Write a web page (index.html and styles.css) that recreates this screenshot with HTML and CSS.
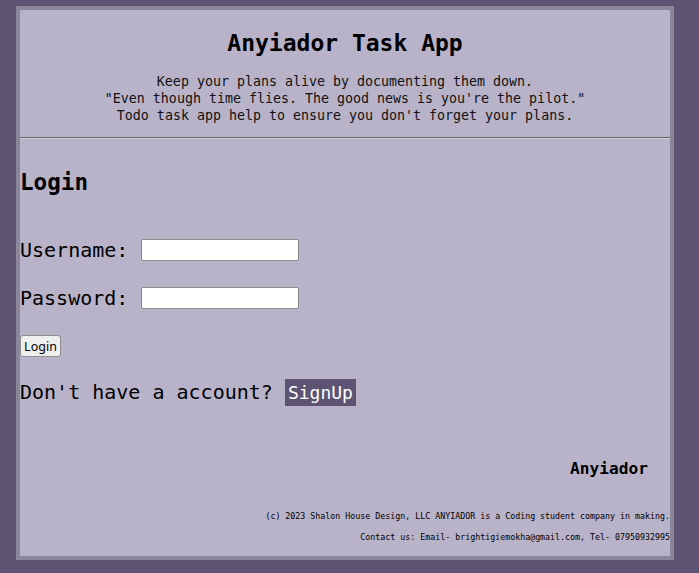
FILE: index.html
```html
<!DOCTYPE html>
<html lang="en">
<head>
<meta charset="utf-8">
<title>Anyiador Task App</title>
<link rel="stylesheet" href="styles.css">
</head>
<body>
<div class="app">
  <header class="header">
    <h1 class="title">Anyiador Task App</h1>
    <p class="intro">Keep your plans alive by documenting them down.<br>"Even though time flies. The good news is you're the pilot."<br>Todo task app help to ensure you don't forget your plans.</p>
  </header>
  <hr class="rule">
  <main class="login">
    <h2 class="login-title">Login</h2>
    <form class="form">
      <div class="row"><label class="label" for="u">Username:</label><input class="field" id="u" type="text"></div>
      <div class="row"><label class="label" for="p">Password:</label><input class="field" id="p" type="password"></div>
      <div class="row btn-row"><button class="btn" type="button">Login</button></div>
    </form>
    <div class="signup-row">Don't have a account? <a class="signup" href="#">SignUp</a></div>
  </main>
  <footer class="footer">
    <div class="brand">Anyiador</div>
    <p class="small first">(c) 2023 Shalon House Design, LLC ANYIADOR is a Coding student company in making.</p>
    <p class="small">Contact us: Email- brightigiemokha@gmail.com, Tel- 07950932995</p>
  </footer>
</div>
</body>
</html>
```
FILE: styles.css
```css
html, body {
  margin: 0;
  padding: 0;
  background: #5c5472;
}
.app {
  margin: 6px 0 0 16px;
  width: 650px;
  height: 546px;
  border: 4px solid #8b8699;
  background: #b8b3c8;
  font-family: "DejaVu Sans Mono", monospace;
  color: #000;
  display: flex;
  flex-direction: column;
  overflow: hidden;
}
.header {
  text-align: center;
  padding-top: 19px;
}
.title {
  margin: 0;
  font-size: 23px;
  line-height: 28px;
  font-weight: bold;
}
.intro {
  margin: 16px 0 0;
  font-size: 13.3px;
  line-height: 17px;
  color: #111;
}
.rule {
  margin: 13px 0 0;
  border: 0;
  border-top: 1px solid #666;
  border-bottom: 1px solid #d2cedb;
  height: 0;
}
.login {
  padding-left: 0;
}
.login-title {
  margin: 29px 0 0;
  font-size: 22.6px;
  line-height: 28px;
  font-weight: bold;
}
.form {
  margin-top: 43px;
  display: flex;
  flex-direction: column;
  gap: 26px;
}
.row {
  display: flex;
  align-items: center;
  height: 22px;
  gap: 13px;
}
.label {
  font-size: 20px;
  line-height: 22px;
}
.field {
  box-sizing: border-box;
  width: 158px;
  height: 22px;
  margin: 0;
  border: 1px solid #8a8a8a;
  border-radius: 2px;
  background: #fff;
}
.btn {
  box-sizing: border-box;
  height: 22px;
  width: 41px;
  padding: 0;
  margin: 0;
  font-family: "Noto Sans", "DejaVu Sans", sans-serif;
  font-size: 12.5px;
  background: #efefef;
  border: 1px solid #8f8f8f;
  border-radius: 3px;
  color: #000;
}
.signup-row {
  margin-top: 22px;
  font-size: 20px;
  line-height: 27px;
  display: flex;
  align-items: center;
  white-space: pre;
}
.signup {
  margin-left: 0;
  background: #5c5472;
  color: #fff;
  text-decoration: none;
  font-size: 18px;
  line-height: 27px;
  padding: 0 3px;
}
.footer {
  margin-top: 53px;
  text-align: right;
}
.brand {
  font-size: 16.2px;
  line-height: 20px;
  font-weight: bold;
  padding-right: 22px;
}
.small {
  margin: 11px 0 0;
  font-size: 8.3px;
  line-height: 10px;
  white-space: nowrap;
}
.small.first {
  margin-top: 32px;
}
```
